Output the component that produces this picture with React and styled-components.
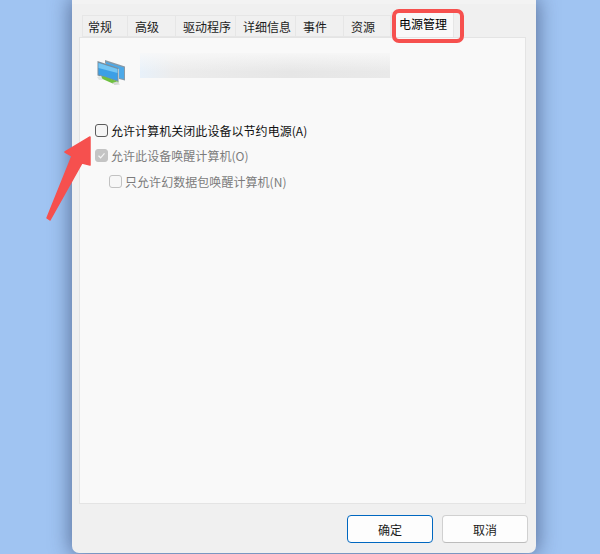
import React from "react";
import styled, { createGlobalStyle } from "styled-components";

const Global = createGlobalStyle`
  html, body { margin: 0; padding: 0; }
  body { width: 600px; height: 554px; overflow: hidden; background: #a0c4f2; }
  * { box-sizing: border-box; }
`;

const Page = styled.div`
  position: relative;
  width: 600px;
  height: 554px;
  overflow: hidden;
  padding: 0 64px 1px 72px;
  font-family: "Noto Sans CJK SC", "Liberation Sans", sans-serif;
  font-size: 12px;
  color: #1a1a1a;
`;

const Dialog = styled.div`
  height: 553px;
  background: #f0f0f0;
  border-top: 4px solid #f3f3f3;
  border-radius: 0 0 7px 7px;
  box-shadow: 0 0 20px 2px rgba(45, 60, 100, 0.6);
  padding: 11px 8px 0 7px;
  display: flex;
  flex-direction: column;
`;

const TabBar = styled.div`
  display: flex;
  height: 22px;
  padding-left: 3px;
  position: relative;
  z-index: 1;
`;

const Tab = styled.div`
  width: ${(p) => p.$w}px;
  height: ${(p) => (p.$active ? 25 : 22)}px;
  margin-top: ${(p) => (p.$active ? -3 : 0)}px;
  padding-left: ${(p) => p.$pad}px;
  line-height: ${(p) => (p.$active ? 22 : 21)}px;
  background: ${(p) => (p.$active ? "#f9f9f9" : "#f0f0f0")};
  border: 1px solid #e6e6e6;
  border-bottom: ${(p) => (p.$active ? "none" : "1px solid #e6e6e6")};
  border-left-width: ${(p) => (p.$first || p.$active ? 1 : 0)}px;
  color: ${(p) => (p.$active ? "#000" : "#1c1c1c")};
  white-space: nowrap;
`;

const Panel = styled.div`
  width: 447px;
  height: 467px;
  flex: none;
  background: #f9f9f9;
  border: 1px solid #e4e4e4;
  padding: 15px 16px 0 15px;
`;

const Head = styled.div`
  display: flex;
  align-items: flex-start;
  height: 67px;
`;

const NetIcon = styled.svg`
  width: 28px;
  height: 25px;
  margin: 7px 15px 0 2px;
  flex: none;
`;

const Blurred = styled.div`
  width: 250px;
  height: 25px;
  background-image: linear-gradient(180deg, rgba(249, 249, 249, 0.85) 0%, rgba(249, 249, 249, 0) 75%),
    linear-gradient(90deg, #e8f1fa 0%, #ececec 14%, #e6e6e6 60%, #e9e9e9 100%);
`;

const Options = styled.div`
  display: flex;
  flex-direction: column;
  gap: 7.5px;
  margin-top: 1px;
`;

const Option = styled.label`
  display: flex;
  align-items: center;
  height: 18px;
  gap: 3px;
  margin-left: ${(p) => (p.$indent ? 14 : 0)}px;
  letter-spacing: 0.05px;
  color: ${(p) => (p.$disabled ? "#7c7c7c" : "#111")};
  white-space: nowrap;
`;

const Box = styled.span`
  width: 13px;
  height: 13px;
  flex: none;
  border-radius: 3px;
  border: 1px solid ${(p) => p.$border};
  background: ${(p) => p.$bg};
  display: flex;
  align-items: center;
  justify-content: center;
`;

const Footer = styled.div`
  display: flex;
  justify-content: flex-end;
  gap: 9px;
  padding: 11px 0 0;
`;

const Button = styled.button`
  width: 86px;
  height: 28px;
  padding: 0;
  background: #fdfdfd;
  border: 1px solid ${(p) => (p.$primary ? "#0067c0" : "#d0d0d0")};
  border-bottom-color: ${(p) => (p.$primary ? "#0067c0" : "#bcbcbc")};
  border-radius: 4px;
  font: inherit;
  color: #1a1a1a;
`;

const Highlight = styled.div`
  position: absolute;
  left: 392px;
  top: 9px;
  width: 72px;
  height: 34px;
  border: 4px solid #f6504e;
  border-radius: 7px;
  z-index: 2;
`;

const Arrow = styled.svg`
  position: absolute;
  left: 40px;
  top: 130px;
  width: 60px;
  height: 95px;
  z-index: 2;
`;

const tabs = [
  { label: "常规", w: 46, pad: 5, first: true },
  { label: "高级", w: 48, pad: 7 },
  { label: "驱动程序", w: 60, pad: 7 },
  { label: "详细信息", w: 60, pad: 7 },
  { label: "事件", w: 48, pad: 7 },
  { label: "资源", w: 47, pad: 7 },
];

export default function App() {
  return (
    <Page>
      <Global />
      <Dialog>
        <TabBar>
          {tabs.map((t) => (
            <Tab key={t.label} $w={t.w} $pad={t.pad} $first={t.first}>
              {t.label}
            </Tab>
          ))}
          <Tab $active $w={63} $pad={7}>
            电源管理
          </Tab>
        </TabBar>
        <Panel>
          <Head>
            <NetIcon viewBox="0 0 28 25">
              <path d="M8 0 L28 6.5 V20.5 L22 19 V8 L8 3.5 Z" fill="#8a9aa6" />
              <path d="M9 2 L27 7.5 V19 L22 18 V9 L9 5 Z" fill="#4da9e8" />
              <path d="M0.5 1 L21.5 8 V22 L0.5 15.5 Z" fill="#7d8f9c" />
              <path d="M1.5 3 L20.5 9 V20.5 L1.5 14.5 Z" fill="#3b9fe6" />
              <path d="M1.5 3 L20.5 9 V13 L1.5 8 Z" fill="#74c6f4" />
              <path d="M1 17 L7 16.5 L22 22 L18 24.5 Z" fill="#6fc040" />
              <path d="M0 17 L4 15.8 L6 20 L2 20 Z" fill="#e2e6e2" />
              <path d="M15 23 L20 21.5 L23 24.5 L18 25 Z" fill="#d6dad6" />
            </NetIcon>
            <Blurred />
          </Head>
          <Options>
            <Option>
              <Box $border="#5c5c5c" $bg="#f5f5f5" />
              允许计算机关闭此设备以节约电源(A)
            </Option>
            <Option $disabled>
              <Box $border="#c4c4c4" $bg="#c4c4c4">
                <svg width="9" height="9" viewBox="0 0 9 9">
                  <path d="M1.5 4.8 L3.6 6.8 L7.5 2.4" fill="none" stroke="#f4f4f4" strokeWidth="1.2" />
                </svg>
              </Box>
              允许此设备唤醒计算机(O)
            </Option>
            <Option $disabled $indent>
              <Box $border="#c2c2c2" $bg="#f7f7f7" />
              只允许幻数据包唤醒计算机(N)
            </Option>
          </Options>
        </Panel>
        <Footer>
          <Button $primary>确定</Button>
          <Button>取消</Button>
        </Footer>
      </Dialog>
      <Highlight />
      <Arrow viewBox="0 0 60 95">
        <path d="M7 88 L10 90 L42 33 L50 35 L50 7 L25 22 L32 26 Z" fill="#f6504e" stroke="#f6504e" strokeWidth="1.5" strokeLinejoin="round" />
      </Arrow>
    </Page>
  );
}
